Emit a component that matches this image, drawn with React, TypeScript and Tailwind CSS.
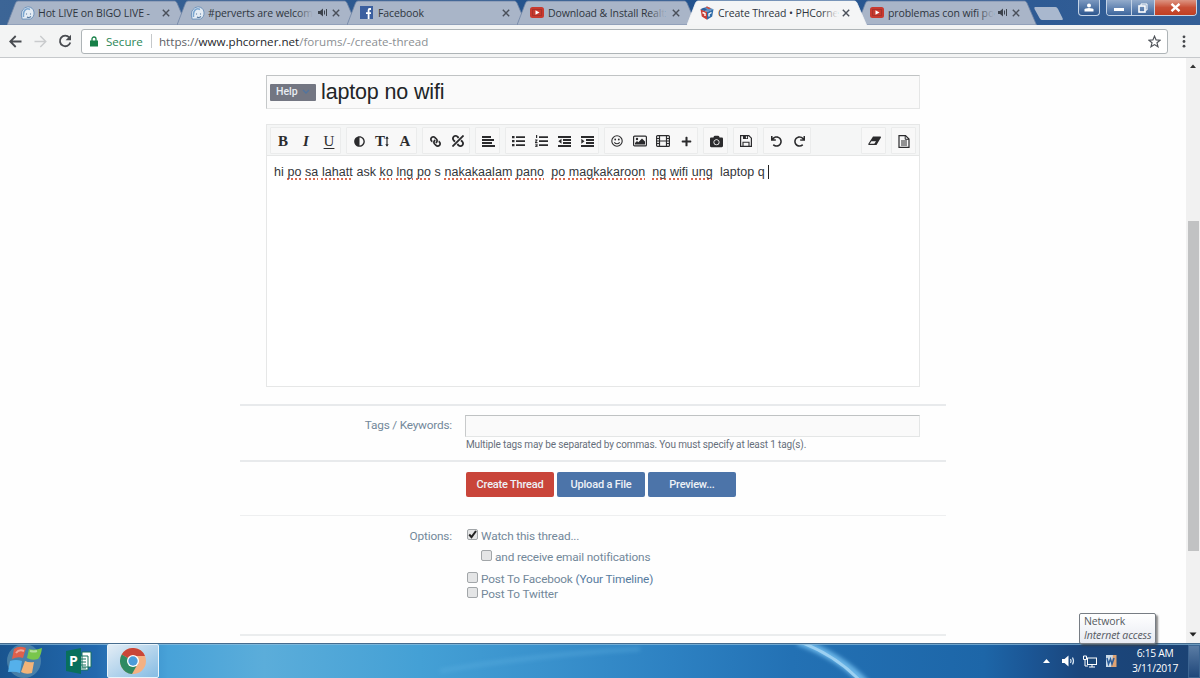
import type { ReactNode } from "react";
import {
  FaAdjust,
  FaCamera,
  FaLink,
  FaPlus,
  FaRedo,
  FaUndo,
  FaUnlink,
} from "react-icons/fa";

type TabIcon = "bigo" | "facebook" | "youtube" | "cube";

type Tab = {
  title: string;
  icon: TabIcon;
  active?: boolean;
  audio?: boolean;
};

const TABS: Tab[] = [
  { title: "Hot LIVE on BIGO LIVE -", icon: "bigo" },
  { title: "#perverts are welcom", icon: "bigo", audio: true },
  { title: "Facebook", icon: "facebook" },
  { title: "Download & Install Realt", icon: "youtube" },
  { title: "Create Thread • PHCorne", icon: "cube", active: true },
  { title: "problemas con wifi po", icon: "youtube", audio: true },
];

function Letter({ className, children }: { className?: string; children: ReactNode }) {
  return (
    <span
      className={`font-['Liberation_Serif',serif] text-[15px] font-bold leading-[16px] ${className ?? ""}`}
    >
      {children}
    </span>
  );
}

function TextSizeIcon() {
  return (
    <span className="flex items-center">
      <Letter>T</Letter>
      <svg width="4" height="11" viewBox="0 0 4 11">
        <path d="M2 1v9" stroke="currentColor" strokeWidth="1.200" />
        <path d="M.3 2.800L2 .3l1.700 2.500zM.3 8.200L2 10.700l1.700-2.500z" fill="currentColor" />
      </svg>
    </span>
  );
}

function Glyph({ d, width = 13 }: { d: string; width?: number }) {
  return (
    <svg width={width} height="12" viewBox={`0 0 ${width} 12`}>
      <path d={d} fill="currentColor" fillRule="evenodd" />
    </svg>
  );
}

function SmileIcon() {
  return (
    <svg width="12" height="12" viewBox="0 0 12 12">
      <circle cx="6" cy="6" r="5.200" stroke="currentColor" strokeWidth="1.100" fill="none" />
      <circle cx="4.200" cy="4.500" r="0.900" fill="currentColor" />
      <circle cx="7.800" cy="4.500" r="0.900" fill="currentColor" />
      <path d="M3.300 7.300q2.700 3 5.400 0" stroke="currentColor" strokeWidth="1.100" fill="none" />
    </svg>
  );
}

function PictureIcon() {
  return (
    <svg width="14" height="12" viewBox="0 0 14 12">
      <rect x="0.600" y="1.100" width="12.800" height="9.800" rx="1" stroke="currentColor" strokeWidth="1.200" fill="none" />
      <circle cx="4" cy="4" r="1.200" fill="currentColor" />
      <path d="M2 9.500V8l2-2 1.300 1.300L9 3.500l3 3v3z" fill="currentColor" />
    </svg>
  );
}

function FilmIcon() {
  return (
    <svg width="14" height="12" viewBox="0 0 14 12">
      <rect x="0.600" y="0.600" width="12.800" height="10.800" rx="1" stroke="currentColor" strokeWidth="1.200" fill="none" />
      <path d="M3.500 1v10M10.500 1v10M3.500 6h7" stroke="currentColor" strokeWidth="1.200" />
      <path d="M1 3.500h2M1 6h2M1 8.500h2M11 3.500h2M11 6h2M11 8.500h2" stroke="currentColor" />
    </svg>
  );
}

function SaveIcon() {
  return (
    <svg width="12" height="12" viewBox="0 0 12 12">
      <path d="M.6.600h8.200l2.600 2.600v8.200H.6z" stroke="currentColor" strokeWidth="1.200" fill="none" />
      <path d="M3 .5h5v3.500H3z" fill="currentColor" />
      <path d="M5.900 1.300h1.200v2H5.900z" fill="#f8f8f8" />
      <path d="M3 11V7.200h6V11" stroke="currentColor" strokeWidth="1.100" fill="none" />
    </svg>
  );
}

function EraserIcon() {
  return (
    <svg width="15" height="12" viewBox="0 0 15 12">
      <path d="M6 1.500h7.500q.8.300.3 1.200L9.500 10H1.800q-1-.3-.4-1.300z" fill="currentColor" />
      <path d="M2.600 8.700l1.800-2.500H9L7.300 8.700z" fill="#f8f8f8" />
    </svg>
  );
}

function PageIcon() {
  return (
    <svg width="12" height="13" viewBox="0 0 12 13">
      <path d="M1 .6h6.500L11 4v8.400H1z" stroke="currentColor" strokeWidth="1.200" fill="none" />
      <path d="M7.200 .6V4.300H11M3 6h6M3 8h6M3 10h6" stroke="currentColor" fill="none" />
    </svg>
  );
}

const ALIGN_LEFT = "M0 1h9v2H0zM0 4h12v2H0zM0 7h10v2H0zM0 10h13v2H0z";
const LIST_UL = "M0 1h2.500v2.300H0zM0 5h2.500v2.300H0zM0 9h2.500v2.300H0zM4 1.200h9v1.900H4zM4 5.200h9v1.900H4zM4 9.200h9v1.900H4z";
const LIST_OL =
  "M1 0h1.200v3H1zM0 4.500h2.500v1L1.200 7h1.300v.9H0V7l1.300-1.600H0zM0 8.800h2.500v3.200H0v-.8h1.500v-.5H.5v-.7h1v-.4H0zM4 1.200h9v1.900H4zM4 5.200h9v1.900H4zM4 9.200h9v1.900H4z";
const OUTDENT = "M0 1h13v2H0zM5 4h8v2H5zM5 7h8v2H5zM0 10h13v2H0zM3.500 3.800v4.900L.3 6.300z";
const INDENT = "M0 1h13v2H0zM5 4h8v2H5zM5 7h8v2H5zM0 10h13v2H0zM.3 3.800v4.900l3.200-2.400z";

const TOOL_GROUPS: ReactNode[][] = [
  [
    <Letter>B</Letter>,
    <Letter className="italic">I</Letter>,
    <Letter className="underline decoration-1 underline-offset-2 !font-normal">U</Letter>,
  ],
  [<FaAdjust size={11} />, <TextSizeIcon />, <Letter>A</Letter>],
  [<FaLink size={11} className="-scale-x-100" />, <FaUnlink size={12} className="-scale-x-100" />],
  [<Glyph d={ALIGN_LEFT} />],
  [<Glyph d={LIST_UL} />, <Glyph d={LIST_OL} />, <Glyph d={OUTDENT} />, <Glyph d={INDENT} />],
  [<SmileIcon />, <PictureIcon />, <FilmIcon />, <FaPlus size={11} />],
  [<FaCamera size={13} />],
  [<SaveIcon />],
  [<FaUndo size={11} />, <FaRedo size={11} />],
];

// [text, misspelled]
const MESSAGE: [string, boolean][] = [
  ["hi ", false],
  ["po", true],
  [" ", false],
  ["sa", true],
  [" ", false],
  ["lahatt", true],
  [" ask ", false],
  ["ko", true],
  [" ", false],
  ["lng", true],
  [" ", false],
  ["po", true],
  [" s ", false],
  ["nakakaalam", true],
  [" ", false],
  ["pano", true],
  ["  ", false],
  ["po", true],
  [" ", false],
  ["magkakaroon", true],
  ["  ", false],
  ["ng", true],
  [" ", false],
  ["wifi", true],
  [" ", false],
  ["ung", true],
  ["  laptop q", false],
];

function Favicon({ icon }: { icon: TabIcon }) {
  if (icon === "facebook") {
    return (
      <svg width="13" height="13" viewBox="0 0 13 13">
        <rect width="13" height="13" fill="#3b5f9f" />
        <path d="M11 3H9.6Q8.6 3 8.6 4.2V13M6 7.2h5" stroke="#fff" strokeWidth="1.8" fill="none" />
      </svg>
    );
  }
  if (icon === "youtube") {
    return (
      <svg width="14" height="13" viewBox="0 0 14 13">
        <rect y="1" width="14" height="11" rx="2.5" fill="#c8392e" />
        <rect x="2.5" y="3.5" width="9" height="6" fill="none" stroke="#8d2a25" strokeDasharray="1 1" />
        <path d="M5.5 4.2v4.6l4-2.3z" fill="#fff" />
      </svg>
    );
  }
  if (icon === "cube") {
    return (
      <svg width="14" height="14" viewBox="0 0 14 14">
        <path d="M0.5 3.2L7 0.5l6.500 2.700L7 6z" fill="#5f93c6" />
        <path d="M0.5 3.2L7 6v7.800L1.800 10.500z" fill="#c93e35" />
        <path d="M13.500 3.200L7 6v7.800l5.200-3.300z" fill="#2e6ba8" />
        <path d="M.5 3.200L4 1.800l3 1.400L4.500 4.900z" fill="#2e5f9c" />
        <path d="M5.500 1.200L7 .5l4 1.700-2 1z" fill="#d64d3b" />
        <path d="M2.500 6.500l2.500 1v2.500M11.500 6.500L9 7.800v2.600" stroke="#fff" strokeWidth="1.400" fill="none" />
      </svg>
    );
  }
  return (
    <svg width="15" height="14" viewBox="0 0 15 14">
      <path
        d="M2.200 13.200Q.5 9 2 5 4 .8 8 .8q5 .3 6 5.200.5 5-3.500 7H7.200z"
        fill="#e4ecf4"
        stroke="#6f93bb"
        strokeWidth="1"
      />
      <path d="M3.500 11Q3 5 6 3.200q2-1 4 .3" stroke="#7ba6d0" strokeWidth="1.600" fill="none" />
      <path d="M6.500 7.500v1M10.500 7.500v1M7 11q2 1.200 4-.5" stroke="#53779f" strokeWidth="1.100" fill="none" />
    </svg>
  );
}

function SpeakerIcon() {
  return (
    <svg width="10" height="9" viewBox="0 0 10 9">
      <path d="M0 3h2l3-2.500v8L2 6H0z" fill="#3d434c" />
      <path d="M6.500 2.500v4M8.500 1v7" stroke="#3d434c" strokeWidth="1" />
    </svg>
  );
}

function BrowserTab({ tab }: { tab: Tab }) {
  const fill = tab.active ? "#f4f5f6" : "#a9b5c8";
  const fade = tab.active ? "to-[#f4f5f6]" : "to-[#a9b5c8]";

  return (
    <div
      className={`relative -mr-[10px] h-[25px] w-[180px] shrink-0 ${tab.active ? "z-10" : ""}`}
    >
      <svg width="180" height="25" viewBox="0 0 180 25" className="absolute inset-0">
        <path
          d="M0 25L8.500 3Q9.500 1 11 1H167.500Q169 1 170 3L179.500 25z"
          fill={fill}
          stroke={tab.active ? "#f4f5f6" : "#6f84a4"}
          strokeWidth="0.800"
        />
      </svg>
      <div className="relative flex h-[25px] items-center pl-[13px] pr-[17px]">
        <span className="flex w-[18px] shrink-0">
          <Favicon icon={tab.icon} />
        </span>
        <span className="relative shrink-0 whitespace-pre text-[10.500px] leading-[16px] tracking-[-0.100px] text-[#2f3540]">
          {tab.title}
          {tab.icon !== "facebook" && (tab.audio || tab.title.length > 23 || tab.active) ? (
            <span className={`absolute inset-y-0 right-0 w-4 bg-linear-to-r from-transparent ${fade}`} />
          ) : null}
        </span>
        <span className="ml-auto flex items-center gap-1">
          {tab.audio ? <SpeakerIcon /> : null}
          <svg width="8" height="8" viewBox="0 0 8 8">
            <path d="M.8.8l6.400 6.400M7.200.8L.8 7.200" stroke="#4a505a" strokeWidth="1.400" />
          </svg>
        </span>
      </div>
    </div>
  );
}

function WindowControls() {
  return (
    <div className="absolute right-[3px] top-0 z-20 flex gap-[6px]">
      <div className="flex h-4 w-[22px] items-center justify-center rounded-b border border-t-0 border-[#c4d3e6] bg-linear-to-b from-[#7b98bf] to-[#2c568e]">
        <svg width="10" height="9" viewBox="0 0 10 9">
          <circle cx="5" cy="2.500" r="2" fill="#fff" />
          <path d="M.5 8.500V6.500Q1 5 5 5t4.500 1.500v2z" fill="#fff" />
        </svg>
      </div>
      <div className="flex h-4 overflow-hidden rounded-b border border-t-0 border-[#c4d3e6]">
        <div className="flex w-[25px] items-center justify-center border-r border-[#c4d3e6] bg-linear-to-b from-[#93abcb] to-[#3d669d]">
          <span className="mt-1 h-[3px] w-[10px] bg-white" />
        </div>
        <div className="flex w-[23px] items-center justify-center border-r border-[#c4d3e6] bg-linear-to-b from-[#93abcb] to-[#3d669d]">
          <svg width="10" height="10" viewBox="0 0 10 10">
            <path d="M3 2.500V1h6v6H7.500" stroke="#fff" fill="none" />
            <rect x="1" y="3" width="6" height="6" stroke="#fff" strokeWidth="1.600" fill="none" />
          </svg>
        </div>
        <div className="flex w-[41px] items-center justify-center bg-linear-to-b from-[#dc9482] via-[#c84f36] to-[#c13f22]">
          <svg width="11" height="9" viewBox="0 0 11 9">
            <path d="M1.500 .8l8 7.400M9.500 .8l-8 7.400" stroke="#fff" strokeWidth="2.400" />
          </svg>
        </div>
      </div>
    </div>
  );
}

function AddressBar() {
  return (
    <div className="flex h-[33px] items-center border-b border-[#c6c9cc] bg-[#f3f4f4]">
      <div className="flex w-[81px] items-center gap-[12px] pl-[9px]">
        <svg width="13" height="13" viewBox="0 0 13 13">
          <path d="M12.500 6.500H1.500M6.700 1L1.200 6.500l5.500 5.500" stroke="#484b50" strokeWidth="1.800" fill="none" />
        </svg>
        <svg width="13" height="13" viewBox="0 0 13 13">
          <path d="M.5 6.500h11M6.300 1l5.500 5.500L6.300 12" stroke="#c9cbcd" strokeWidth="1.400" fill="none" />
        </svg>
        <svg width="14" height="14" viewBox="0 0 14 14" className="-ml-px">
          <path d="M11.300 3.500A5.300 5.300 0 1 0 12.300 8.500" stroke="#484b50" strokeWidth="1.800" fill="none" />
          <path d="M13 .8v5.400H7.600z" fill="#484b50" />
        </svg>
      </div>
      <div className="flex h-[25px] w-[1087px] items-center rounded-[3px] border border-[#aeb4b7] bg-white pl-2 pr-[6px] text-[11.600px]">
        <svg width="8" height="11" viewBox="0 0 8 11">
          <path d="M2 5V3a2 2 0 0 1 4 0v2" stroke="#178048" strokeWidth="1.300" fill="none" />
          <rect y="4.500" width="8" height="6" fill="#178048" />
        </svg>
        <span className="ml-2 mt-px w-[45px] whitespace-nowrap text-[#2a8657]">Secure</span>
        <span className="mr-[7px] h-[14px] w-px bg-[#c5c8ca]" />
        <span className="mt-px whitespace-nowrap text-[#8b8f93]">
          <span className="text-[#5d6166]">https://</span>
          <span className="text-[#25282c]">www.phcorner.net</span>
          /forums/-/create-thread
        </span>
        <svg width="13" height="13" viewBox="0 0 13 13" className="ml-auto">
          <path
            d="M6.500 1.200l1.600 3.700 4 .3-3.100 2.600 1 4-3.500-2.200L3 11.800l1-4L.9 5.200l4-.3z"
            stroke="#4f5359"
            strokeWidth="1.200"
            fill="none"
          />
        </svg>
      </div>
      <svg width="4" height="13" viewBox="0 0 4 13" className="ml-[14px]">
        <circle cx="2" cy="1.800" r="1.400" fill="#45484c" />
        <circle cx="2" cy="6.500" r="1.400" fill="#45484c" />
        <circle cx="2" cy="11.200" r="1.400" fill="#45484c" />
      </svg>
    </div>
  );
}

function ToolGroup({ icons }: { icons: ReactNode[] }) {
  return (
    <div className="flex h-[27px] rounded-[1px] border border-[#ebecec] bg-[#f8f8f8]">
      {icons.map((icon, index) => (
        <button
          key={index}
          className="flex w-[23px] items-center justify-center pl-px pt-[2px] text-[#2b2b2d]"
        >
          {icon}
        </button>
      ))}
    </div>
  );
}

function EditorToolbar() {
  return (
    <div className="flex h-[31px] items-center gap-[5px] border-b border-[#e6e7e7] bg-[#f5f6f6] pl-[3px] pr-[3px]">
      {TOOL_GROUPS.map((icons, index) => (
        <ToolGroup key={index} icons={icons} />
      ))}
      <div className="ml-auto flex gap-[5px]">
        <ToolGroup icons={[<EraserIcon />]} />
        <ToolGroup icons={[<PageIcon />]} />
      </div>
    </div>
  );
}

function Checkbox({ checked, children }: { checked?: boolean; children: ReactNode }) {
  return (
    <label className="flex h-[15px] items-center gap-[3px] whitespace-nowrap">
      <span className="-mt-[4px] flex h-[11px] w-[11px] items-center justify-center rounded-[2px] border border-[#a2a6a9] bg-[#e4e5e6]">
        {checked ? (
          <svg width="9" height="9" viewBox="0 0 9 9">
            <path d="M1.200 4.500l2.300 2.700L8 1" stroke="#222" strokeWidth="2" fill="none" />
          </svg>
        ) : null}
      </span>
      {children}
    </label>
  );
}

function ThreadForm() {
  return (
    <main className="flex h-[585px] flex-1 flex-col overflow-hidden bg-[#fefefe] pl-[240px] pt-[17px] font-[Roboto,sans-serif] text-[#73889a]">
      <div className="ml-[26px] flex h-[34px] w-[654px] items-center border border-[#e5e6e6] border-l-[#c5c8c9] border-t-[#c0c3c4] bg-[#fafafa] pl-[3px]">
        <span className="flex h-[17px] w-[46px] items-center rounded-[1px] bg-[#737682] pl-[6px] text-[10.500px] font-medium text-[#e9edf2]">
          Help
          <svg width="8" height="6" viewBox="0 0 8 6" className="ml-[4px]">
            <path d="M1 1l3 3 3-3" stroke="#51749e" strokeWidth="1.300" fill="none" />
          </svg>
        </span>
        <span className="ml-[5px] font-['Liberation_Sans',sans-serif] text-[21.500px] leading-[30px] tracking-[-0.150px] text-[#222527]">
          laptop no wifi
        </span>
      </div>

      <div className="ml-[26px] mt-[15px] h-[263px] w-[654px] border border-[#e6e7e7] bg-white">
        <EditorToolbar />
        <p className="flex items-center whitespace-pre pl-[7px] pt-[7px] font-['Liberation_Sans',sans-serif] text-[12.500px] leading-[18px] tracking-[0.065px] text-[#33363a]">
          <span>
            {MESSAGE.map(([text, misspelled], index) => (
              <span
                key={index}
                className={
                  misspelled
                    ? "underline decoration-[#d9694f] decoration-dotted decoration-[1.500px] underline-offset-[2px] [text-decoration-skip-ink:none]"
                    : ""
                }
              >
                {text}
              </span>
            ))}
          </span>
          <span className="ml-[3px] h-[14px] w-px bg-[#222]" />
        </p>
      </div>

      <section className="mt-[17px] flex h-[56px] w-[706px] border-t-2 border-[#e8eaec] pt-[9px]">
        <label className="w-[212px] pt-px text-right text-[11.800px] leading-[18px] tracking-[-0.200px]">
          Tags / Keywords:
        </label>
        <div className="ml-[13px]">
          <div className="h-[22px] w-[455px] border border-[#e4e6e6] border-l-[#c8cacb] border-t-[#bfc2c3] bg-[#fafafa]" />
          <p className="whitespace-nowrap pl-px text-[10px] leading-[15px] tracking-[-0.130px] text-[#666f7b]">
            Multiple tags may be separated by commas. You must specify at least 1 tag(s).
          </p>
        </div>
      </section>

      <section className="flex h-[55px] w-[706px] gap-[3px] border-t-2 border-[#e8eaec] pl-[226px] pt-[10px] text-[11px] font-medium tracking-[-0.200px] text-[#eef2f7]">
        <button className="h-[25px] w-[88px] rounded-[2px] bg-[#c9453a] pt-px">Create Thread</button>
        <button className="h-[25px] w-[88px] rounded-[2px] bg-[#4c74a9] pt-px">Upload a File</button>
        <button className="h-[25px] w-[88px] rounded-[2px] bg-[#4c74a9] pt-px">Preview...</button>
      </section>

      <section className="flex h-[120px] w-[706px] shrink-0 border-t border-[#eeeff0] pt-[13px] text-[11.800px] leading-[15px] tracking-[-0.150px]">
        <div className="w-[212px] text-right">Options:</div>
        <div className="ml-[15px] flex flex-col">
          <Checkbox checked>Watch this thread...</Checkbox>
          <div className="ml-[14px] mt-[6px]">
            <Checkbox>and receive email notifications</Checkbox>
          </div>
          <div className="mt-[7px]">
            <Checkbox>
              <span>
                Post To Facebook <span className="text-[#567b9e]">(Your Timeline)</span>
              </span>
            </Checkbox>
          </div>
          <Checkbox>Post To Twitter</Checkbox>
        </div>
      </section>
      <div className="-mt-px h-[2px] w-[706px] shrink-0 bg-[#ebedee]" />
    </main>
  );
}

function Scrollbar() {
  return (
    <div className="flex h-[585px] w-[14px] shrink-0 flex-col items-center bg-[#f1f1f1]">
      <svg width="14" height="16" viewBox="0 0 14 16">
        <path d="M4 10h6L7 6.500z" fill="#333" />
      </svg>
      <div className="mt-[147px] h-[330px] w-[11px] bg-[#c1c2c3]" />
      <svg width="14" height="16" viewBox="0 0 14 16" className="mt-auto">
        <path d="M3.500 5.500h7L7 9.500z" fill="#222" />
      </svg>
    </div>
  );
}

function StartOrb() {
  return (
    <svg width="42" height="34" viewBox="0 0 42 34">
      <circle cx="24" cy="17" r="17" fill="#8db9c4" opacity="0.400" />
      <path d="M14 5q5-4 12-1l-3 10q-5-2-11 1z" fill="#e0604c" />
      <path d="M29 5q6 2 13-1-1 8-4 11-6 2-11-1z" fill="#79c64c" />
      <path d="M10 17q6-2 12 0l-2 12q-5-2-12-1z" fill="#55b0ea" />
      <path d="M25 17q4 2 9 1l-2 11q-6 2-11-1z" fill="#f3b478" />
      <path d="M16 9q3-4 8-2M30 7q4 1 7 0" stroke="#fff" strokeOpacity="0.450" strokeWidth="2" fill="none" />
    </svg>
  );
}

function PublisherIcon() {
  return (
    <svg width="28" height="26" viewBox="0 0 28 26">
      <path d="M17 4h9v15h-9zM14 8h9v14h-9z" fill="#fff" stroke="#16735f" />
      <path d="M16 11h5M16 14h5M16 17h5M16 20h5" stroke="#16735f" />
      <path d="M1 3l15-3v26L1 23z" fill="#08705c" />
      <text x="4" y="18" fill="#fff" fontSize="14" fontWeight="700" fontFamily="Open Sans, sans-serif">
        P
      </text>
    </svg>
  );
}

function ChromeIcon() {
  return (
    <svg width="26" height="26" viewBox="0 0 26 26">
      <circle cx="13" cy="13" r="13" fill="#f4b183" />
      <path d="M13 13L1.740 6.500A13 13 0 0 1 25 8H13z" fill="#c94638" />
      <path d="M1.740 6.500A13 13 0 0 0 12 26l5.500-9.800L13 13z" fill="#2f8a62" />
      <circle cx="13" cy="13" r="6" fill="#fff" />
      <circle cx="13" cy="13" r="4.700" fill="#4b9cd9" />
    </svg>
  );
}

function Taskbar() {
  return (
    <footer className="relative flex h-[35px] items-center overflow-hidden border-t border-[#466c8e] bg-linear-to-r from-[#1d5796] via-[#2d83c4] to-[#1b467c] font-['Open_Sans',sans-serif]">
      <svg
        width="1200"
        height="35"
        viewBox="0 0 1200 35"
        preserveAspectRatio="none"
        className="absolute inset-0"
      >
        <defs>
          <linearGradient id="sky">
            <stop offset="0" stopColor="#19548f" />
            <stop offset="0.080" stopColor="#2269ae" />
            <stop offset="0.140" stopColor="#48a2d8" />
            <stop offset="0.220" stopColor="#5badda" />
            <stop offset="0.350" stopColor="#44a0d5" />
            <stop offset="0.450" stopColor="#3a92cd" />
            <stop offset="0.560" stopColor="#2d81c2" />
            <stop offset="0.660" stopColor="#2371b4" />
            <stop offset="0.820" stopColor="#1d66a8" />
            <stop offset="0.860" stopColor="#1b5594" />
            <stop offset="0.900" stopColor="#1b467c" />
            <stop offset="1" stopColor="#1b4273" />
          </linearGradient>
          <filter id="soft" x="-20%" y="-50%" width="140%" height="200%">
            <feGaussianBlur stdDeviation="2" />
          </filter>
        </defs>
        <rect width="1200" height="35" fill="url(#sky)" />
        <path d="M440 27Q540 10 640 5" stroke="#62b3e3" strokeWidth="4" opacity="0.400" fill="none" filter="url(#soft)" />
        <path d="M798 -3Q840 12 866 40" stroke="#6bb6e8" strokeWidth="8" fill="none" filter="url(#soft)" />
        <path d="M798 -3Q838 12 863 40" stroke="#9bd0f2" strokeWidth="3" fill="none" />
        <path d="M0 .5H1200" stroke="#8ebedd" opacity="0.700" />
      </svg>

      <div className="relative flex h-full flex-1 items-center">
        <div className="w-[65px]">
          <StartOrb />
        </div>
        <div className="w-[42px]">
          <PublisherIcon />
        </div>
        <div className="flex h-[34px] w-[52px] items-center justify-center rounded-[2px] border border-[#e8f4fb] bg-linear-to-br from-[#e3edf5] to-[#86bce3]">
          <ChromeIcon />
        </div>

        <div className="ml-auto flex items-center">
          <svg width="7" height="4" viewBox="0 0 7 4">
            <path d="M0 4h7L3.500 0z" fill="#fff" />
          </svg>
          <svg width="14" height="12" viewBox="0 0 14 12" className="ml-[12px]">
            <path d="M0 4h2.500L6.500.5v11L2.500 8H0z" fill="#fff" />
            <path d="M8.500 4q1.200 2 0 4M10.500 2.500q2 3.500 0 7" stroke="#dce8f4" strokeWidth="1.200" fill="none" />
          </svg>
          <svg width="14" height="13" viewBox="0 0 14 13" className="ml-[7px]">
            <rect x="4.500" y="3" width="9" height="6.500" fill="#1b4777" stroke="#fff" />
            <path d="M9 9.500v2.500M6 12h6M2 5v6h3M.5 1h3v3.500h-3z" stroke="#fff" fill="none" />
          </svg>
          <svg width="12" height="14" viewBox="0 0 12 14" className="ml-[8px]">
            <path d="M1 1h8v12H1z" fill="#cbdae7" />
            <path d="M8 1h3.500v12H6z" fill="#e0a373" />
            <path d="M2 4l1.500 6L5.500 5 7 10l2-6" stroke="#2c5e9b" strokeWidth="1.500" fill="none" />
          </svg>
          <div className="ml-[9px] w-[58px] text-center text-[10.300px] leading-[15px] tracking-[-0.300px] text-white">
            <p className="whitespace-nowrap">6:15 AM</p>
            <p className="whitespace-nowrap">3/11/2017</p>
          </div>
          <span className="ml-[4px] h-[33px] w-[12px] border border-[#3c6592] bg-linear-to-b from-[#5a7ca4] to-[#1f477a]" />
        </div>
      </div>
    </footer>
  );
}

export default function App() {
  return (
    <div className="relative flex h-[678px] w-[1200px] flex-col overflow-hidden bg-white font-['Open_Sans',sans-serif]">
      <header className="relative flex h-[25px] bg-linear-to-r from-[#3c6596] via-[#1f508c] to-[#345f97] pl-[7px]">
        {TABS.map((tab) => (
          <BrowserTab key={tab.title} tab={tab} />
        ))}
        <svg width="30" height="14" viewBox="0 0 30 14" className="ml-[7px] mt-[7px]">
          <path d="M1 0h20.500q1.500 0 2.500 2l4.500 9q1 2-1 2H8q-1.500 0-2.500-2L.5 2Q0 0 1 0z" fill="#a9b8ce" />
        </svg>
        <WindowControls />
      </header>
      <AddressBar />
      <div className="flex h-[585px]">
        <ThreadForm />
        <Scrollbar />
      </div>
      <Taskbar />

      <div className="absolute left-[1079px] top-[613px] h-[31px] w-[77px] rounded-[2px] border border-[#777d84] bg-linear-to-b from-white to-[#e8ebf2] pl-[4px] text-[10.500px] leading-[14px] tracking-[-0.100px] text-[#555a61] shadow-[2px_2px_2px_rgba(60,60,60,0.6)]">
        <p>Network</p>
        <p className="whitespace-nowrap italic">Internet access</p>
      </div>
    </div>
  );
}
